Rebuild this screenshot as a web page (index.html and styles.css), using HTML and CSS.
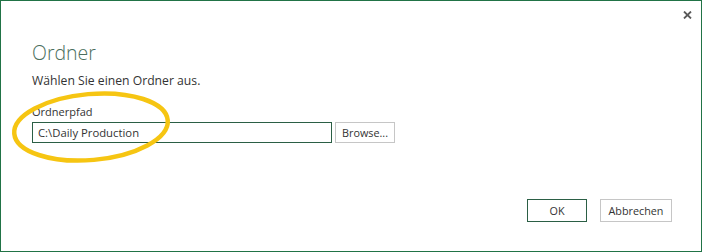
FILE: index.html
```html
<!DOCTYPE html>
<html lang="de">
<head>
<meta charset="utf-8">
<title>Ordner</title>
<link rel="stylesheet" href="styles.css">
</head>
<body>
<div class="dialog">
  <div class="topbar">
    <button class="close" aria-label="Schließen">
      <svg width="9" height="8" viewBox="0 0 9 8"><path d="M1 0.5 L8 7.5 M8 0.5 L1 7.5" stroke="#5a5a5a" stroke-width="1.8" fill="none"/></svg>
    </button>
  </div>
  <div class="title">Ordner</div>
  <div class="subtitle">Wählen Sie einen Ordner aus.</div>
  <div class="label">Ordnerpfad</div>
  <div class="pathrow">
    <input class="path" type="text" value="C:\Daily Production" readonly>
    <button class="btn browse">Browse...</button>
  </div>
  <div class="footer">
    <button class="btn ok">OK</button>
    <button class="btn cancel">Abbrechen</button>
  </div>
  <svg class="mark" width="170" height="80" viewBox="0 0 170 80">
    <ellipse cx="84" cy="38" rx="77" ry="33" transform="rotate(-5 84 38)" fill="none" stroke="#f6c512" stroke-width="4.5"/>
  </svg>
</div>
</body>
</html>
```
FILE: styles.css
```css
html, body {
  margin: 0;
  padding: 0;
  background: #ffffff;
}
body {
  font-family: "Open Sans", "Noto Sans", sans-serif;
  color: #3a3a3a;
}
.dialog {
  position: relative;
  width: 702px;
  height: 252px;
  box-sizing: border-box;
  border: 1px solid #217346;
  padding: 0 0 0 31px;
  display: flex;
  flex-direction: column;
  background: #ffffff;
}
.topbar {
  display: flex;
  justify-content: flex-end;
  height: 28px;
  padding-right: 8px;
}
.close {
  border: 0;
  background: transparent;
  padding: 0;
  margin-top: 10px;
  width: 11px;
  height: 10px;
  display: flex;
  align-items: flex-start;
  justify-content: center;
}
.title {
  font-size: 19.5px;
  font-weight: 300;
  line-height: 28px;
  color: #4b6e5d;
  margin-top: 10px;
}
.subtitle {
  font-size: 12.2px;
  line-height: 20px;
  color: #333333;
  margin-top: 4px;
}
.label {
  font-size: 11px;
  line-height: 16px;
  color: #333333;
  margin-top: 13px;
}
.pathrow {
  display: flex;
  gap: 3px;
  margin-top: 2px;
}
.path {
  width: 300px;
  height: 21px;
  box-sizing: border-box;
  border: 1px solid #2b5f45;
  padding: 0 5px;
  font-family: inherit;
  font-size: 11.3px;
  color: #333333;
  outline: none;
  margin: 0;
}
.btn {
  box-sizing: border-box;
  height: 21px;
  border: 1px solid #c6c6c6;
  background: #ffffff;
  font-family: inherit;
  font-size: 10.8px;
  color: #333333;
  padding: 0;
  margin: 0;
}
.browse {
  width: 60px;
}
.footer {
  margin-top: auto;
  display: flex;
  justify-content: flex-end;
  gap: 13px;
  padding-right: 29px;
  padding-bottom: 29px;
}
.ok {
  width: 60px;
  height: 23px;
  border-color: #2b5f45;
}
.cancel {
  width: 72px;
  height: 23px;
}
.mark {
  position: absolute;
  left: 6px;
  top: 88px;
}
```
